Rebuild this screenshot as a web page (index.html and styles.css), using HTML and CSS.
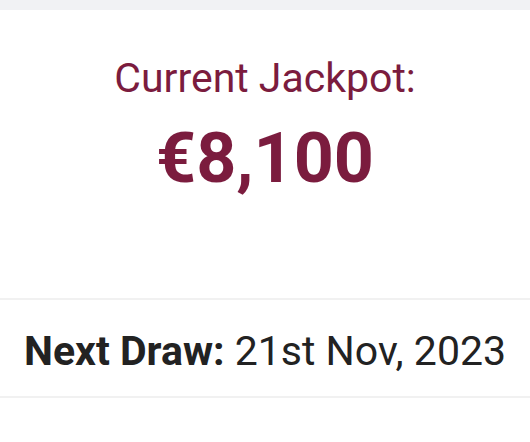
FILE: index.html
```html
<!DOCTYPE html>
<html lang="en">
<head>
<meta charset="utf-8">
<link rel="stylesheet" href="styles.css">
</head>
<body>
<div class="topbar"></div>
<section class="jackpot">
  <div class="label">Current Jackpot:</div>
  <div class="amount">€8,100</div>
</section>
<section class="draw">
  <span class="draw-label">Next Draw:</span> <span class="draw-date">21st Nov, 2023</span>
</section>
</body>
</html>
```
FILE: styles.css
```css
html, body {
  margin: 0;
  padding: 0;
  background: #ffffff;
  font-family: Roboto, "Noto Sans", Arial, sans-serif;
}
.topbar {
  height: 10px;
  background: #f1f2f4;
}
.jackpot {
  height: 290px;
  box-sizing: border-box;
  padding-top: 44px;
  text-align: center;
  color: #7b1c3e;
  border-bottom: 2px solid #f1f1f1;
}
.label {
  font-size: 41px;
  line-height: 48px;
  font-weight: 400;
}
.amount {
  margin-top: 15px;
  font-size: 70px;
  line-height: 82px;
  font-weight: 700;
}
.draw {
  height: 98px;
  box-sizing: border-box;
  padding-top: 27px;
  text-align: center;
  font-size: 41px;
  line-height: 48px;
  color: #222222;
  border-bottom: 2px solid #f1f1f1;
}
.draw-label {
  font-weight: 700;
}
.draw-date {
  font-weight: 400;
}
```
